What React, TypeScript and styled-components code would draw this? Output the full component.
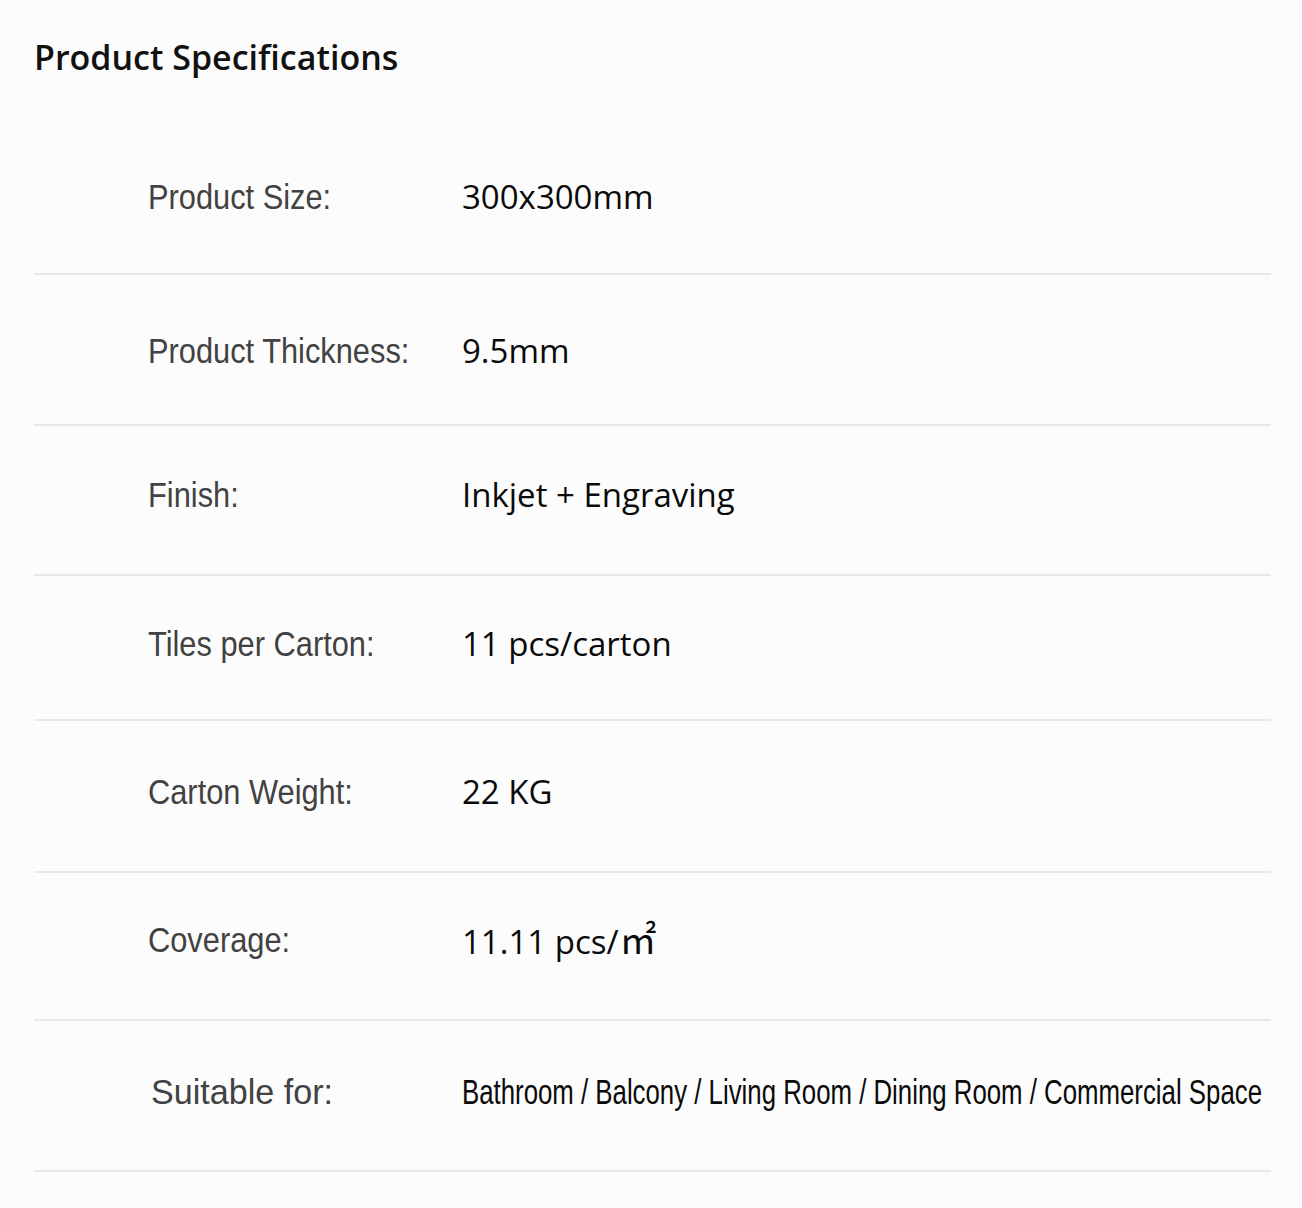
import styled, { createGlobalStyle } from "styled-components";

const GlobalStyle = createGlobalStyle`
  html, body {
    margin: 0;
    padding: 0;
    background: #fcfcfc;
    overflow-x: hidden;
  }
`;

const SpecsContainer = styled.section`
  padding: 0 31px 0 34px;
  background: #fcfcfc;
`;

const Title = styled.h2`
  margin: 0;
  padding-top: 34px;
  height: 123px;
  box-sizing: border-box;
  font-family: "Open Sans", "Noto Sans", sans-serif;
  font-size: 34px;
  font-weight: 600;
  line-height: 46px;
  color: #111;
`;

const SpecRow = styled.div<{ $height: number; $center: number }>`
  display: grid;
  grid-template-columns: 314px 1fr;
  align-items: start;
  height: ${(p) => p.$height}px;
  padding-top: ${(p) => p.$center - 20}px;
  box-sizing: border-box;
  padding-left: 114px;
  border-bottom: 2px solid #e8e8e8;
  line-height: 40px;
`;

// the source text is a condensed face; no narrow font is installed, so squeeze Arial-metric text
const Label = styled.div<{ $squeeze: number; $shift: number }>`
  font-family: "Liberation Sans", Arial, sans-serif;
  font-size: 35px;
  color: #424242;
  white-space: nowrap;
  margin-left: ${(p) => p.$shift}px;
  transform: scaleX(${(p) => p.$squeeze});
  transform-origin: left center;
`;

const Value = styled.div`
  font-family: "Open Sans", "Noto Sans", sans-serif;
  font-size: 33px;
  color: #0a0a0a;
  white-space: nowrap;
`;

const NarrowValue = styled.div`
  font-family: "Liberation Sans", Arial, sans-serif;
  font-size: 35px;
  color: #0a0a0a;
  white-space: nowrap;
  transform: scaleX(0.737);
  transform-origin: left center;
`;

const Unit = styled.span`
  font-family: "Noto Sans CJK SC", sans-serif;
  font-size: 1.12em;
  line-height: 1;
  margin-left: 1px;
`;

type Spec = {
  label: string;
  value: React.ReactNode;
  height: number;
  center: number;
  narrow?: boolean;
  squeeze?: number;
  shift?: number;
};

const specs: Spec[] = [
  { label: "Product Size:", value: "300x300mm", height: 152, center: 74 },
  { label: "Product Thickness:", value: "9.5mm", height: 151, center: 76 },
  { label: "Finish:", value: "Inkjet + Engraving", height: 150, center: 69 },
  { label: "Tiles per Carton:", value: "11 pcs/carton", height: 145, center: 68 },
  { label: "Carton Weight:", value: "22 KG", height: 152, center: 71 },
  {
    label: "Coverage:",
    value: (
      <>
        11.11 pcs/<Unit>㎡</Unit>
      </>
    ),
    height: 148,
    center: 67,
  },
  {
    label: "Suitable for:",
    value: "Bathroom / Balcony / Living Room / Dining Room / Commercial Space",
    height: 151,
    center: 71,
    narrow: true,
    squeeze: 0.975,
    shift: 3,
  },
];

const App = () => {
  return (
    <>
      <GlobalStyle />
      <SpecsContainer>
        <Title>Product Specifications</Title>
        {specs.map((s) => (
          <SpecRow key={s.label} $height={s.height} $center={s.center}>
            <Label $squeeze={s.squeeze ?? 0.88} $shift={s.shift ?? 0}>
              {s.label}
            </Label>
            {s.narrow ? <NarrowValue>{s.value}</NarrowValue> : <Value>{s.value}</Value>}
          </SpecRow>
        ))}
      </SpecsContainer>
    </>
  );
};

export default App;
